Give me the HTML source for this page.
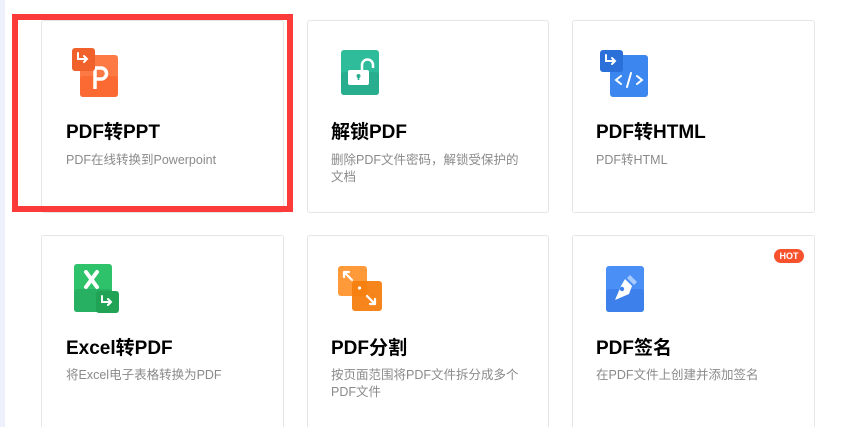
<!DOCTYPE html>
<html><head><meta charset="utf-8"><style>
*{margin:0;padding:0;box-sizing:border-box}
html,body{width:847px;height:427px;overflow:hidden}
body{background:#fff;position:relative;font-family:"Liberation Sans","Noto Sans CJK SC",sans-serif}
.side{position:absolute;left:0;top:0;width:5px;height:427px;background:#eef0fb}
.card{position:absolute;border:1px solid #e6e6e6;border-radius:3px;background:#fff}
.open{border-bottom:none;border-radius:3px 3px 0 0}
.t{position:absolute;font-size:19px;font-weight:bold;color:#000;white-space:nowrap}
.d{position:absolute;font-size:12.5px;color:#8a8a8a;line-height:17px;width:196px}
svg{position:absolute}
.red{position:absolute;left:12px;top:14px;width:281px;height:198px;border:6px solid #fb3a3a}
.hot{position:absolute;left:774px;top:249px;width:30px;height:14px;border-radius:7px;background:#f5522d;color:#fff;font-size:9px;font-weight:bold;text-align:center;line-height:14px}
</style></head><body>
<div class="side"></div>
<div class="card" style="left:41px;top:20px;width:243px;height:193px"></div>
<div class="card" style="left:307px;top:20px;width:242px;height:193px"></div>
<div class="card" style="left:572px;top:20px;width:243px;height:193px"></div>
<div class="card open" style="left:41px;top:235px;width:243px;height:192px"></div>
<div class="card open" style="left:307px;top:235px;width:242px;height:192px"></div>
<div class="card open" style="left:572px;top:235px;width:243px;height:192px"></div>
<div class="red"></div>

<svg style="left:70px;top:46px" width="50" height="53" viewBox="0 0 50 53">
<rect x="10" y="9" width="38" height="42" rx="3" fill="#fe7a45"/>
<rect x="10" y="30" width="38" height="21" rx="3" fill="#fb6a33"/>
<path d="M25 43V22h6a5.5 5.5 0 0 1 0 11h-6" stroke="#fff" stroke-width="3.5" fill="none"/>
<rect x="2" y="2" width="23" height="23" rx="3" fill="#f0612c"/>
<path d="M8 7v6h9M14 10l3 3-3 3" stroke="#fff" stroke-width="2" fill="none" stroke-linecap="round"/>
</svg>
<svg style="left:341px;top:50px" width="38" height="45" viewBox="0 0 38 45">
<rect width="38" height="45" rx="3" fill="#2fbc9b"/>
<rect y="22" width="38" height="23" rx="3" fill="#29ad8f"/>
<path d="M21 20v-5a5.5 5.5 0 0 1 11 0v3" stroke="#fff" stroke-width="2.5" fill="none"/>
<rect x="7" y="20" width="21" height="15" rx="2" fill="#fff"/>
<circle cx="17.5" cy="26" r="2" fill="#2aae90"/><rect x="16.7" y="26" width="1.6" height="4" fill="#2aae90"/>
</svg>
<svg style="left:599px;top:49px" width="51" height="50" viewBox="0 0 51 50">
<rect x="11" y="6" width="38" height="42" rx="3" fill="#3c86f0"/>
<path d="M22 27l-5 4 5 4M38 27l5 4-5 4M32 24l-4 14" stroke="#fff" stroke-width="2" fill="none" stroke-linecap="round"/>
<rect x="1" y="1" width="23" height="22" rx="3" fill="#2b6fd8"/>
<path d="M7 6v6h9M13 9l3 3-3 3" stroke="#fff" stroke-width="2" fill="none" stroke-linecap="round"/>
</svg>
<svg style="left:73px;top:263px" width="47" height="52" viewBox="0 0 47 52">
<rect x="1" y="1" width="38" height="48" rx="3" fill="#2ec36b"/>
<rect x="1" y="26" width="38" height="23" rx="3" fill="#27b061"/>
<path d="M13 9l11 15M24 9L13 24" stroke="#fff" stroke-width="4" stroke-linecap="round"/>
<rect x="23" y="28" width="23" height="22" rx="3" fill="#21a356"/>
<path d="M29 33v6h9M35 36l3 3-3 3" stroke="#fff" stroke-width="2" fill="none" stroke-linecap="round"/>
</svg>
<svg style="left:337px;top:265px" width="47" height="48" viewBox="0 0 47 48">
<rect x="1" y="1" width="29" height="30" rx="3" fill="#ff9a3a"/>
<rect x="15" y="16" width="30" height="30" rx="3" fill="#f5800f" opacity=".95"/>
<path d="M7 7l8 8M7 7v5M7 7h5M38 39l-8-8M38 39v-5M38 39h-5" stroke="#fff" stroke-width="2.2" fill="none" stroke-linecap="round"/>
<circle cx="22.5" cy="23" r="1.6" fill="#fff"/>
</svg>
<svg style="left:606px;top:266px" width="38" height="46" viewBox="0 0 38 46">
<rect width="38" height="46" rx="3" fill="#4a8ff5"/>
<rect y="23" width="38" height="23" rx="3" fill="#3d80ec"/>
<path d="M24 9l7 7-3 3-7-7z" fill="#a9cbff"/>
<path d="M19 13l7 7-3 8-14 6 6-14z" fill="#fff"/>
<circle cx="16" cy="23" r="2.2" fill="#3d80ec"/>
</svg>
<div class="hot">HOT</div>

<div class="t" style="left:66px;top:117px">PDF转PPT</div>
<div class="d" style="left:66px;top:152px">PDF在线转换到Powerpoint</div>
<div class="t" style="left:331px;top:117px">解锁PDF</div>
<div class="d" style="left:331px;top:152px">删除PDF文件密码，解锁受保护的文档</div>
<div class="t" style="left:596px;top:117px">PDF转HTML</div>
<div class="d" style="left:596px;top:152px">PDF转HTML</div>
<div class="t" style="left:66px;top:333px">Excel转PDF</div>
<div class="d" style="left:66px;top:367px">将Excel电子表格转换为PDF</div>
<div class="t" style="left:331px;top:333px">PDF分割</div>
<div class="d" style="left:331px;top:367px">按页面范围将PDF文件拆分成多个PDF文件</div>
<div class="t" style="left:596px;top:333px">PDF签名</div>
<div class="d" style="left:596px;top:367px">在PDF文件上创建并添加签名</div>
</body></html>
